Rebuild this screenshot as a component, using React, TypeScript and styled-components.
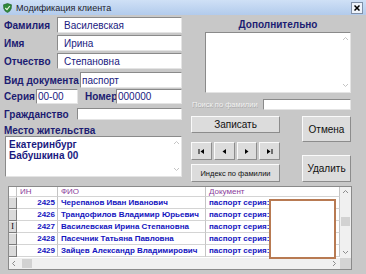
import React from "react";
import styled, { createGlobalStyle } from "styled-components";

const Global = createGlobalStyle`
  html, body { margin: 0; padding: 0; background: #c8c8c8; }
  body { font-family: "Liberation Sans", Arial, sans-serif; }
`;

const Window = styled.div`
  width: 366px;
  height: 274px;
  overflow: hidden;
  background: #c8c8c8;
  display: flex;
  flex-direction: column;
`;

const TitleBar = styled.div`
  height: 15px;
  flex: none;
  display: flex;
  align-items: center;
  padding: 0 3px;
  background: linear-gradient(#cfe0f6, #b2cbec);
  font-size: 9px;
  color: #1c1c2c;
`;

const Title = styled.span`
  margin-left: 4px;
`;

const CloseBtn = styled.div`
  margin-left: auto;
  width: 10px;
  height: 10px;
  border: 1px solid #8090a8;
  background: #eef3fb;
  display: flex;
  align-items: center;
  justify-content: center;
`;

const Top = styled.div`
  display: flex;
  height: 171px;
  flex: none;
`;

const LeftCol = styled.div`
  width: 182px;
  flex: none;
  display: flex;
  flex-direction: column;
`;

const FieldRow = styled.div<{ $mt: number; $h: number }>`
  margin-top: ${(p) => p.$mt}px;
  height: ${(p) => p.$h}px;
  flex: none;
  display: flex;
  align-items: center;
`;

const Label = styled.span<{ $w?: number; $pl?: number }>`
  ${(p) => (p.$w ? `width: ${p.$w}px; flex: none;` : "")}
  padding-left: ${(p) => p.$pl ?? 4}px;
  box-sizing: border-box;
  font-weight: bold;
  font-size: 10px;
  color: #1c1c72;
  white-space: nowrap;
`;

const Field = styled.div<{ $w?: number; $pad?: number }>`
  height: 100%;
  ${(p) => (p.$w ? `width: ${p.$w}px; flex: none;` : "flex: 1;")}
  box-sizing: border-box;
  background: #fff;
  border-top: 1px solid #8a8a8a;
  border-left: 1px solid #8a8a8a;
  border-bottom: 1px solid #e4e4e4;
  border-right: 1px solid #e4e4e4;
  padding-left: ${(p) => p.$pad ?? 1}px;
  display: flex;
  align-items: center;
  font-size: 10px;
  color: #1a1a80;
  white-space: nowrap;
  overflow: hidden;
`;

const Memo = styled.div<{ $h: number; $ml: number; $w?: number }>`
  margin-left: ${(p) => p.$ml}px;
  ${(p) => (p.$w ? `width: ${p.$w}px;` : "")}
  height: ${(p) => p.$h}px;
  flex: none;
  box-sizing: border-box;
  background: #fff;
  border-top: 1px solid #8a8a8a;
  border-left: 1px solid #8a8a8a;
  border-bottom: 1px solid #e4e4e4;
  border-right: 1px solid #e4e4e4;
  display: flex;
`;

const MemoText = styled.div`
  flex: 1;
  padding: 2px 0 0 3px;
  font-size: 10px;
  font-weight: bold;
  line-height: 11px;
  color: #1a1a80;
`;

const MemoScroll = styled.div`
  width: 10px;
  display: flex;
  flex-direction: column;
  justify-content: space-between;
  align-items: center;
  padding: 3px 0;
`;

const RightCol = styled.div`
  flex: 1;
  display: flex;
  flex-direction: column;
`;

const Heading = styled.div`
  margin-left: 23px;
  width: 146px;
  height: 17px;
  padding-top: 4px;
  box-sizing: border-box;
  text-align: center;
  font-weight: bold;
  font-size: 10px;
  color: #1c1c72;
`;

const SearchRow = styled.div`
  margin-top: 6px;
  height: 11px;
  display: flex;
  align-items: center;
  padding-left: 10px;
`;

const SearchLabel = styled.span`
  width: 71px;
  flex: none;
  font-size: 7.5px;
  color: #f2f2f2;
  text-shadow: 0.5px 0.5px 0 #a9a9a9;
  white-space: nowrap;
`;

const ButtonsArea = styled.div`
  margin-top: 6px;
  margin-left: 9px;
  display: flex;
  gap: 22px;
`;

const ButtonCol = styled.div<{ $w: number }>`
  width: ${(p) => p.$w}px;
  display: flex;
  flex-direction: column;
`;

const Button = styled.div<{ $h: number; $mt?: number; $fs?: number }>`
  height: ${(p) => p.$h}px;
  margin-top: ${(p) => p.$mt ?? 0}px;
  box-sizing: border-box;
  background: #dcdcdc;
  border-top: 1px solid #fafafa;
  border-left: 1px solid #fafafa;
  border-right: 1px solid #8c8c8c;
  border-bottom: 1px solid #8c8c8c;
  display: flex;
  align-items: center;
  justify-content: center;
  font-size: ${(p) => p.$fs ?? 10}px;
  color: #101010;
  white-space: nowrap;
`;

const NavRow = styled.div`
  margin-top: 9px;
  height: 18px;
  display: grid;
  grid-template-columns: repeat(4, 1fr);
  gap: 2px;
`;

const GridBox = styled.div`
  margin-left: 8px;
  width: 344px;
  height: 84px;
  flex: none;
  box-sizing: border-box;
  border: 1px solid #8a8a8a;
  background: #fff;
  position: relative;
  display: grid;
  grid-template-columns: 331px 11px;
  grid-template-rows: 71px 11px;
`;

const Table = styled.div`
  display: grid;
  grid-template-columns: 8px 41px 148px 1fr;
  grid-template-rows: 10px repeat(5, 12px);
  overflow: hidden;
`;

const Cell = styled.div<{ $kind: "head" | "ind" | "num" | "text" }>`
  box-sizing: border-box;
  overflow: hidden;
  white-space: nowrap;
  font-size: 8px;
  line-height: 11px;
  border-right: 1px solid #c4c4c4;
  border-bottom: 1px solid #d4d4d4;
  ${(p) =>
    p.$kind === "head"
      ? `color: #8a3c9a; padding-left: 3px; line-height: 9px;`
      : p.$kind === "ind"
      ? `background: #dadada; border-right: 1px solid #7c7c7c; border-bottom: 1px solid #7c7c7c; border-top: 1px solid #f4f4f4; font-family: "Liberation Serif", serif; color: #000; text-align: center; line-height: 10px;`
      : p.$kind === "num"
      ? `color: #1414c0; font-weight: bold; text-align: right; padding-right: 2px;`
      : `color: #1414c0; font-weight: bold; padding-left: 3px;`}
`;

const VScroll = styled.div`
  background: #f0f0f0;
  display: flex;
  flex-direction: column;
  align-items: center;
  padding: 2px 0;
  box-sizing: border-box;
`;

const VThumb = styled.div`
  margin-top: 21px;
  width: 9px;
  height: 9px;
  background: #d2d2d2;
`;

const Spacer = styled.div`
  flex: 1;
`;

const HScroll = styled.div`
  background: #f0f0f0;
  display: flex;
  align-items: center;
  padding: 0 2px;
`;

const HThumb = styled.div`
  margin-left: 4px;
  width: 10px;
  height: 9px;
  background: #d2d2d2;
`;

const Corner = styled.div`
  background: #d4d4d4;
`;

const Overlay = styled.div`
  position: absolute;
  left: 260px;
  top: 12px;
  width: 67px;
  height: 60px;
  box-sizing: border-box;
  border: 2px solid #b87a52;
  background: #fff;
`;

const Chevron = ({ dir, color = "#8c8c8c" }: { dir: "up" | "down" | "left" | "right"; color?: string }) => {
  const d = {
    up: "M1 4 L3.5 1.5 L6 4",
    down: "M1 2 L3.5 4.5 L6 2",
    left: "M4 1 L1.5 3.5 L4 6",
    right: "M2 1 L4.5 3.5 L2 6",
  }[dir];
  return (
    <svg width="7" height="7" viewBox="0 0 7 7">
      <path d={d} fill="none" stroke={color} strokeWidth="1" />
    </svg>
  );
};

const NavIcon = ({ kind }: { kind: "first" | "prev" | "next" | "last" }) => (
  <svg width="7" height="5" viewBox="0 0 7 5">
    {kind === "first" && (
      <>
        <rect x="0.5" y="0" width="1" height="5" fill="#000" />
        <path d="M6 0 L2.5 2.5 L6 5 Z" fill="#000" />
      </>
    )}
    {kind === "prev" && <path d="M5 0 L1.5 2.5 L5 5 Z" fill="#000" />}
    {kind === "next" && <path d="M2 0 L5.5 2.5 L2 5 Z" fill="#000" />}
    {kind === "last" && (
      <>
        <path d="M1 0 L4.5 2.5 L1 5 Z" fill="#000" />
        <rect x="5.5" y="0" width="1" height="5" fill="#000" />
      </>
    )}
  </svg>
);

const rows = [
  { id: "2425", name: "Черепанов Иван Иванович", ind: "" },
  { id: "2426", name: "Трандофилов Владимир Юрьевич", ind: "" },
  { id: "2427", name: "Василевская Ирина Степановна", ind: "I" },
  { id: "2428", name: "Пасечник Татьяна Павловна", ind: "" },
  { id: "2429", name: "Зайцев Александр Владимирович", ind: "" },
];

export default function App() {
  return (
    <>
      <Global />
      <Window>
        <TitleBar>
          <svg width="9" height="10" viewBox="0 0 9 10">
            <path d="M4.5 0.5 L8.5 1.8 L8.2 5.5 Q7.5 8.3 4.5 9.6 Q1.5 8.3 0.8 5.5 L0.5 1.8 Z" fill="#2f8a3a" stroke="#1d5a24" strokeWidth="0.6" />
            <path d="M2.3 5 L4 6.6 L6.8 3" fill="none" stroke="#e8f6e0" strokeWidth="1.2" />
          </svg>
          <Title>Модификация клиента</Title>
          <CloseBtn>
            <svg width="6" height="6" viewBox="0 0 6 6">
              <path d="M0.5 0.5 L5.5 5.5 M5.5 0.5 L0.5 5.5" stroke="#000" strokeWidth="1.5" />
            </svg>
          </CloseBtn>
        </TitleBar>
        <Top>
          <LeftCol>
            <FieldRow $mt={2} $h={16}>
              <Label $w={57}>Фамилия</Label>
              <Field $pad={6}>Василевская</Field>
            </FieldRow>
            <FieldRow $mt={2} $h={16}>
              <Label $w={57}>Имя</Label>
              <Field $pad={6}>Ирина</Field>
            </FieldRow>
            <FieldRow $mt={2} $h={16}>
              <Label $w={57}>Отчество</Label>
              <Field $pad={6}>Степановна</Field>
            </FieldRow>
            <FieldRow $mt={3} $h={16}>
              <Label $w={80}>Вид документа</Label>
              <Field>паспорт</Field>
            </FieldRow>
            <FieldRow $mt={1} $h={15}>
              <Label $w={36}>Серия</Label>
              <Field $w={42}>00-00</Field>
              <Label $w={38} $pl={7}>Номер</Label>
              <Field>000000</Field>
            </FieldRow>
            <FieldRow $mt={4} $h={12}>
              <Label $w={77}>Гражданство</Label>
              <Field />
            </FieldRow>
            <FieldRow $mt={5} $h={11}>
              <Label>Место жительства</Label>
            </FieldRow>
            <Memo $ml={5} $h={41}>
              <MemoText>
                Екатеринбург
                <br />
                Бабушкина 00
              </MemoText>
              <MemoScroll>
                <Chevron dir="up" color="#c4c4c4" />
                <Chevron dir="down" color="#c4c4c4" />
              </MemoScroll>
            </Memo>
          </LeftCol>
          <RightCol>
            <Heading>Дополнительно</Heading>
            <Memo $ml={23} $w={146} $h={61}>
              <MemoText />
              <MemoScroll>
                <Chevron dir="up" color="#c4c4c4" />
                <Chevron dir="down" color="#c4c4c4" />
              </MemoScroll>
            </Memo>
            <SearchRow>
              <SearchLabel>Поиск по фамилии</SearchLabel>
              <Field $w={88} />
            </SearchRow>
            <ButtonsArea>
              <ButtonCol $w={89}>
                <Button $h={17}>Записать</Button>
                <NavRow>
                  <Button $h={18}><NavIcon kind="first" /></Button>
                  <Button $h={18}><NavIcon kind="prev" /></Button>
                  <Button $h={18}><NavIcon kind="next" /></Button>
                  <Button $h={18}><NavIcon kind="last" /></Button>
                </NavRow>
                <Button $h={18} $mt={4} $fs={7.5}>Индекс по фамилии</Button>
              </ButtonCol>
              <ButtonCol $w={49}>
                <Button $h={26}>Отмена</Button>
                <Button $h={27} $mt={13}>Удалить</Button>
              </ButtonCol>
            </ButtonsArea>
          </RightCol>
        </Top>
        <GridBox>
          <Table>
            <Cell $kind="head" />
            <Cell $kind="head">ИН</Cell>
            <Cell $kind="head">ФИО</Cell>
            <Cell $kind="head">Документ</Cell>
            {rows.map((r) => (
              <React.Fragment key={r.id}>
                <Cell $kind="ind">{r.ind}</Cell>
                <Cell $kind="num">{r.id}</Cell>
                <Cell $kind="text">{r.name}</Cell>
                <Cell $kind="text">паспорт серия:</Cell>
              </React.Fragment>
            ))}
          </Table>
          <VScroll>
            <Chevron dir="up" />
            <VThumb />
            <Spacer />
            <Chevron dir="down" />
          </VScroll>
          <HScroll>
            <Chevron dir="left" />
            <HThumb />
            <Spacer />
            <Chevron dir="right" />
          </HScroll>
          <Corner />
          <Overlay />
        </GridBox>
      </Window>
    </>
  );
}
